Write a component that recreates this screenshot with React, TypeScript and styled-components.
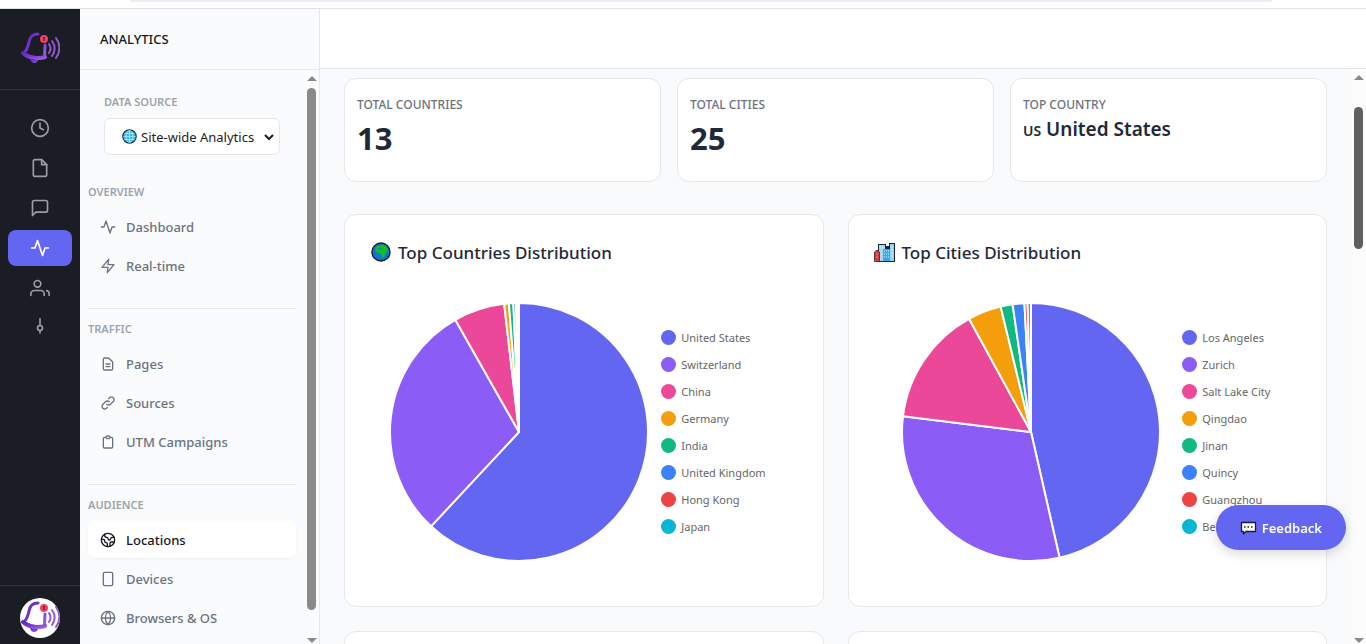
import React from 'react';
import styled, { createGlobalStyle } from 'styled-components';

const sans = `"Noto Sans", "Open Sans", sans-serif`;

const GlobalStyle = createGlobalStyle`
  *, *::before, *::after { box-sizing: border-box; }
  html, body, #root { height: 100%; }
  body { margin: 0; background: #fff; color: #1f2937; font-family: ${sans}; overflow: hidden; }
  button, select { font-family: inherit; }
  a { color: inherit; text-decoration: none; }
  h1, h2, h3, p, ul, dl, dd { margin: 0; padding: 0; }
  ul { list-style: none; }
`;

const Page = styled.div`
  display: flex;
  flex-direction: column;
  height: 100vh;
`;

const TopStrip = styled.div`
  display: flex;
  justify-content: center;
  height: 9px;
  flex: none;
  padding: 0 94px 0 130px;
  border-bottom: 1px solid #dfe1e5;
`;

const TopPill = styled.div`
  flex: 1;
  height: 2px;
  background: #ecedf9;
  border-radius: 0 0 8px 8px;
`;

const Shell = styled.div`
  display: grid;
  grid-template-columns: 80px 240px minmax(0, 1fr);
  flex: 1;
  min-height: 0;
`;

const Rail = styled.nav`
  display: flex;
  flex-direction: column;
  min-height: 0;
  background: #1a1d24;
`;

const RailLogo = styled.a`
  display: flex;
  align-items: center;
  justify-content: center;
  height: 81px;
  border-bottom: 1px solid #2e3138;
`;

const RailList = styled.ul`
  display: flex;
  flex: 1;
  flex-direction: column;
  gap: 4px;
  padding: 20px 8px 0;
`;

const RailLink = styled.a<{ $active?: boolean }>`
  display: flex;
  align-items: center;
  justify-content: center;
  height: 36px;
  border-radius: 8px;
  color: ${p => (p.$active ? '#fff' : '#9a9da5')};
  background: ${p => (p.$active ? '#6366f1' : 'transparent')};
`;

const RailFooter = styled.div`
  display: flex;
  justify-content: center;
  padding: 12px 0 6px;
  border-top: 1px solid #2e3138;
`;

const Avatar = styled.button`
  display: flex;
  align-items: center;
  justify-content: center;
  width: 40px;
  height: 40px;
  padding: 0;
  border: 0;
  border-radius: 50%;
  background: #fff;
  overflow: hidden;
`;

const Side = styled.aside`
  display: flex;
  flex-direction: column;
  min-height: 0;
  background: #fafbfc;
  border-right: 1px solid #e5e7eb;
`;

const SideHeader = styled.header`
  display: flex;
  align-items: center;
  height: 61px;
  flex: none;
  padding: 0 20px;
  border-bottom: 1px solid #e5e7eb;
`;

const SideTitle = styled.h1`
  font-size: 13px;
  line-height: 20px;
  font-weight: 500;
  color: #14171f;
`;

const ScrollRow = styled.div`
  display: flex;
  flex: 1;
  min-height: 0;
`;

const SideBody = styled.div`
  flex: 1;
  min-width: 0;
  padding: 8px 8px 0;
  overflow: hidden;
`;

const ScrollTrack = styled.div<{ $width: number; $light?: boolean }>`
  display: flex;
  flex: none;
  flex-direction: column;
  align-items: center;
  width: ${p => p.$width}px;
  padding: 6px 0 1px;
  background: ${p => (p.$light ? '#fcfcfc' : 'transparent')};
`;

const ArrowUp = styled.span`
  border: 5px solid transparent;
  border-top: 0;
  border-bottom-color: #8a8a8a;
`;

const ArrowDown = styled.span`
  margin-top: auto;
  border: 5px solid transparent;
  border-bottom: 0;
  border-top-color: #8a8a8a;
`;

const Thumb = styled.span<{ $top: number; $height: string; $color: string }>`
  width: 9px;
  height: ${p => p.$height};
  margin-top: ${p => p.$top}px;
  border-radius: 5px;
  background: ${p => p.$color};
`;

const Source = styled.div`
  display: flex;
  flex-direction: column;
  gap: 6px;
  padding: 14px 16px 17px;
`;

const Caption = styled.span`
  display: block;
  font-size: 11px;
  line-height: 20px;
  font-weight: 600;
  color: #9ca3af;
`;

const SelectBox = styled.div`
  display: flex;
  align-items: center;
  height: 37px;
  padding: 0 2px 0 17px;
  background: #fff;
  border: 1px solid #e5e7eb;
  border-radius: 6px;
`;

const Select = styled.select`
  flex: 1;
  min-width: 0;
  height: 32px;
  padding: 0;
  border: 0;
  background: transparent;
  color: #1a1d24;
  font-size: 13px;
  font-weight: 400;
`;

const NavSection = styled.section`
  padding: 10px 0 24px;
  border-bottom: 1px solid #e5e7eb;
  &:last-child { border-bottom: 0; }
`;

const NavHeading = styled(Caption).attrs({ as: 'h2' })`
  padding-bottom: 7px;
`;

const NavList = styled.ul`
  display: flex;
  flex-direction: column;
  gap: 3px;
`;

const NavLink = styled.a<{ $active?: boolean }>`
  display: flex;
  align-items: center;
  gap: 10px;
  height: 36px;
  padding: 0 12px;
  border-radius: 6px;
  font-size: 13px;
  font-weight: 500;
  color: ${p => (p.$active ? '#14171f' : '#6b7280')};
  background: ${p => (p.$active ? '#fff' : 'transparent')};
  box-shadow: ${p => (p.$active ? '0 1px 2px rgba(0, 0, 0, 0.05)' : 'none')};
`;

const Main = styled.main`
  display: flex;
  flex-direction: column;
  min-width: 0;
  min-height: 0;
  background: #f9fafb;
`;

const MainHeader = styled.header`
  height: 60px;
  flex: none;
  background: #fff;
  border-bottom: 1px solid #e5e7eb;
`;

const MainBody = styled.div`
  display: flex;
  flex: 1;
  flex-direction: column;
  gap: 32px;
  min-width: 0;
  padding: 9px 24px 0;
  overflow: hidden;
`;

const StatGrid = styled.dl`
  display: grid;
  grid-template-columns: repeat(3, minmax(0, 1fr));
  gap: 16px;
`;

const Card = styled.section`
  background: #fff;
  border: 1px solid #e5e7eb;
  border-radius: 12px;
`;

const StatCard = styled(Card).attrs({ as: 'div' })`
  height: 104px;
  padding: 16px 12px;
`;

const StatLabel = styled.dt`
  font-size: 12px;
  line-height: 20px;
  font-weight: 500;
  color: #6b7280;
`;

const StatValue = styled.dd<{ $small?: boolean }>`
  font-size: ${p => (p.$small ? 19 : 31)}px;
  line-height: ${p => (p.$small ? 28 : 46)}px;
  font-weight: ${p => (p.$small ? 600 : 700)};
  color: #1f2937;
`;

const FlagCode = styled.span`
  font-size: 14px;
  font-weight: 600;
`;

const ChartGrid = styled.div`
  display: grid;
  grid-template-columns: repeat(2, minmax(0, 1fr));
  gap: 24px;
`;

const ChartCard = styled(Card)`
  min-height: 393px;
  padding: 24px;
`;

const ChartTitle = styled.h3`
  display: flex;
  align-items: center;
  gap: 6px;
  height: 26px;
  margin-bottom: 17px;
  font-size: 17px;
  font-weight: 500;
  color: #1f2937;
`;

const ChartBody = styled.div<{ $gap: number }>`
  display: flex;
  align-items: center;
  justify-content: center;
  gap: ${p => p.$gap}px;
  height: 300px;
`;

const Legend = styled.ul<{ $width: number }>`
  display: flex;
  flex-direction: column;
  gap: 7px;
  width: ${p => p.$width}px;
`;

const LegendItem = styled.li`
  display: flex;
  align-items: center;
  gap: 5px;
  font-size: 11px;
  line-height: 20px;
  color: #666;
  white-space: nowrap;
`;

const Dot = styled.span<{ $color: string }>`
  width: 15px;
  height: 15px;
  flex: none;
  border-radius: 50%;
  background: ${p => p.$color};
`;

const Feedback = styled.button`
  position: fixed;
  right: 20px;
  bottom: 94px;
  display: flex;
  align-items: center;
  gap: 5px;
  height: 45px;
  padding: 0 24px;
  border: 0;
  border-radius: 23px;
  background: #6366f1;
  color: #fff;
  font-size: 13px;
  font-weight: 600;
  box-shadow: 0 4px 12px rgba(0, 0, 0, 0.15);
`;

const Glyph = ({ size, width = 2, children }: { size: number; width?: number; children: React.ReactNode }) => (
  <svg width={size} height={size} viewBox="0 0 24 24" fill="none" stroke="currentColor" strokeWidth={width}
    strokeLinecap="round" strokeLinejoin="round" aria-hidden="true">
    {children}
  </svg>
);

const shapes = {
  clock: <><circle cx="12" cy="12" r="10" /><path d="M12 6v6l4 2" /></>,
  file: <><path d="M14 2H6a2 2 0 0 0-2 2v16a2 2 0 0 0 2 2h12a2 2 0 0 0 2-2V8z" /><path d="M14 2v6h6" /></>,
  message: <path d="M21 15a2 2 0 0 1-2 2H7l-4 4V5a2 2 0 0 1 2-2h14a2 2 0 0 1 2 2z" />,
  activity: <path d="M22 12h-4l-3 9L9 3l-3 9H2" />,
  users: <><path d="M17 21v-2a4 4 0 0 0-4-4H5a4 4 0 0 0-4 4v2" /><circle cx="9" cy="7" r="4" /><path d="M23 21v-2a4 4 0 0 0-3-3.87" /></>,
  node: <><circle cx="12" cy="12" r="3" /><path d="M12 1v8M12 15v3" /></>,
  bolt: <path d="M13 2 3 14h9l-1 8 10-12h-9z" />,
  doc: <path d="M9 12h6m-6 4h6m2 5H7a2 2 0 0 1-2-2V5a2 2 0 0 1 2-2h5.59a1 1 0 0 1 .7.29l5.42 5.42a1 1 0 0 1 .29.7V19a2 2 0 0 1-2 2z" />,
  link: <path d="M13.83 10.17a4 4 0 0 0-5.66 0l-4 4a4 4 0 1 0 5.66 5.66l1.1-1.1m-.76-4.9a4 4 0 0 0 5.66 0l4-4a4 4 0 0 0-5.66-5.66l-1.1 1.1" />,
  clipboard: <path d="M9 5H7a2 2 0 0 0-2 2v12a2 2 0 0 0 2 2h10a2 2 0 0 0 2-2V7a2 2 0 0 0-2-2h-2M9 5a2 2 0 0 0 2 2h2a2 2 0 0 0 2-2M9 5a2 2 0 0 1 2-2h2a2 2 0 0 1 2 2" />,
  earth: <><circle cx="12" cy="12" r="10" /><path d="M21.540 15H17a2 2 0 0 0-2 2v4.540M7 3.340V5a3 3 0 0 0 3 3 2 2 0 0 1 2 2c0 1.100.9 2 2 2a2 2 0 0 0 2-2c0-1.100.9-2 2-2h3.170M11 21.950V18a2 2 0 0 0-2-2 2 2 0 0 1-2-2v-1a2 2 0 0 0-2-2H2.050" /></>,
  device: <rect x="5" y="2" width="14" height="20" rx="2" />,
  globe: <><circle cx="12" cy="12" r="10" /><path d="M2 12h20M12 2a15.3 15.3 0 0 1 4 10 15.3 15.3 0 0 1-4 10 15.3 15.3 0 0 1-4-10 15.3 15.3 0 0 1 4-10z" /></>,
};

const BellLogo = ({ id }: { id: string }) => (
  <svg width="40" height="40" viewBox="0 0 40 40" fill="none" aria-hidden="true">
    <defs>
      <linearGradient id={id} x1="0" y1="0" x2="1" y2="1">
        <stop offset="0" stopColor="#5b2bb8" />
        <stop offset="0.5" stopColor="#7a35d6" />
        <stop offset="1" stopColor="#9a5fe0" />
      </linearGradient>
    </defs>
    <g stroke={`url(#${id})`} strokeLinecap="round" strokeLinejoin="round">
      <path d="M18 5c-6 0-8 3-9 8-1 5-2 8-5 11 4 4 16 6 21 4-1-4 0-7 0-12" strokeWidth="3" />
      <path d="M3 24c5 5 15 6 22 4" strokeWidth="4" />
      <path d="M17 4h3" strokeWidth="4" />
    </g>
    <path d="M10 30c1 5 7 5 8 1z" fill={`url(#${id})`} />
    <g stroke="#9657c9" strokeLinecap="round" strokeWidth="2">
      <path d="M29 15c2 3 2 6 0 9" />
      <path d="M32 12c4 5 3 11 0 15" />
      <path d="M36 9c5 7 4 14 0 20" />
    </g>
    <circle cx="24" cy="10" r="4" fill="#f43f5e" />
    <path d="M23 9l1-1v4" stroke="#3b1030" />
  </svg>
);

const WebEmoji = () => (
  <svg width="15" height="15" viewBox="0 0 15 15" fill="none" aria-hidden="true">
    <circle cx="7.5" cy="7.5" r="6.7" fill="#35b8f1" stroke="#173a4c" strokeWidth="1.2" />
    <path d="M1.5 7.5h12M7.5 1.5v12M2.5 4.5h10M2.5 10.5h10" stroke="#b9e8fb" strokeWidth="0.8" />
    <ellipse cx="7.5" cy="7.5" rx="3.3" ry="6" stroke="#b9e8fb" strokeWidth="0.8" />
  </svg>
);

const EarthEmoji = () => (
  <svg width="23" height="20" viewBox="0 0 23 20" aria-hidden="true">
    <circle cx="12" cy="10" r="9" fill="#0a78d4" stroke="#171b24" strokeWidth="1.4" />
    <path d="M6.500 6 8 4l3-.5 3-1 3.500 2 1.500 3-1 2.500-2 2-1 3-1.800 1-1.200-3.500-1.500-1.500-3-.5-1-2z" fill="#17bd1f" />
    <path d="M9 6.500h3l2 1.500" fill="none" stroke="#0a78d4" strokeWidth="0.800" />
  </svg>
);

const CityEmoji = () => (
  <svg width="23" height="20" viewBox="0 0 23 20" aria-hidden="true">
    <path d="M5 2h8v2h3V1h6v19H5z" fill="#1c2530" />
    <path d="M6 3h6v16H6z" fill="#a5dcf2" />
    <path d="M17 2h4v17h-4z" fill="#8fd3f0" />
    <path d="M10 7h7v12h-7z" fill="#38a9e6" />
    <path d="M11 9h1M13 9h1M15 9h1M11 12h1M13 12h1M15 12h1M11 15h1M13 15h1M15 15h1M18 5h2M18 8h2M18 11h2M18 14h2M7 5h1M9 5h1" stroke="#d8f2fd" />
    <path d="M1.500 19.500V10L4 8l2.500 2v9.500z" fill="#e2383f" stroke="#43202a" strokeWidth="0.800" />
    <path d="M3.500 12h1M3.500 15h1" stroke="#ffb0a8" />
  </svg>
);

const SpeechEmoji = () => (
  <svg width="17" height="16" viewBox="0 0 17 16" aria-hidden="true">
    <path d="M1.500 2.500h14v9H6l-2.500 2.500v-2.500h-2z" fill="#fff" stroke="#191b2b" strokeWidth="1.300" strokeLinejoin="round" />
    <path d="M4 7h1.500M7.500 7H9M11 7h1.500" stroke="#191b2b" strokeWidth="1.500" />
  </svg>
);

const palette = ['#6366f1', '#8b5cf6', '#ec4899', '#f59e0b', '#10b981', '#3b82f6', '#ef4444', '#06b6d4'];

type Slice = { label: string; end: number };

const countries: Slice[] = [
  { label: 'United States', end: 223 },
  { label: 'Switzerland', end: 330.4 },
  { label: 'China', end: 353.4 },
  { label: 'Germany', end: 355.5 },
  { label: 'India', end: 357.5 },
  { label: 'United Kingdom', end: 358.7 },
  { label: 'Hong Kong', end: 359.4 },
  { label: 'Japan', end: 360 },
];

const cities: Slice[] = [
  { label: 'Los Angeles', end: 167.2 },
  { label: 'Zurich', end: 277 },
  { label: 'Salt Lake City', end: 331.3 },
  { label: 'Qingdao', end: 346.4 },
  { label: 'Jinan', end: 351.8 },
  { label: 'Quincy', end: 357.1 },
  { label: 'Guangzhou', end: 358.5 },
  { label: 'Beijing', end: 360 },
];

const RADIUS = 129;

const point = (deg: number) => {
  const a = ((deg - 90) * Math.PI) / 180;
  return `${(RADIUS * Math.cos(a)).toFixed(2)} ${(RADIUS * Math.sin(a)).toFixed(2)}`;
};

const Pie = ({ slices, label }: { slices: Slice[]; label: string }) => (
  <svg width="258" height="258" viewBox="-129 -129 258 258" role="img" aria-label={label}>
    {slices.map((s, i) => {
      const start = i ? slices[i - 1].end : 0;
      return (
        <path
          key={s.label}
          d={`M0 0L${point(start)}A${RADIUS} ${RADIUS} 0 ${s.end - start > 180 ? 1 : 0} 1 ${point(s.end)}Z`}
          fill={palette[i]}
          stroke="#fff"
          strokeWidth="2"
          strokeLinejoin="bevel"
        />
      );
    })}
  </svg>
);

type ChartProps = { title: string; icon: React.ReactNode; slices: Slice[]; gap: number; legendWidth: number };

const Chart = ({ title, icon, slices, gap, legendWidth }: ChartProps) => (
  <ChartCard>
    <ChartTitle>{icon}{title}</ChartTitle>
    <ChartBody $gap={gap}>
      <Pie slices={slices} label={title} />
      <Legend $width={legendWidth}>
        {slices.map((s, i) => (
          <LegendItem key={s.label}><Dot $color={palette[i]} />{s.label}</LegendItem>
        ))}
      </Legend>
    </ChartBody>
  </ChartCard>
);

const rail: { name: string; icon: keyof typeof shapes }[] = [
  { name: 'History', icon: 'clock' },
  { name: 'Files', icon: 'file' },
  { name: 'Messages', icon: 'message' },
  { name: 'Analytics', icon: 'activity' },
  { name: 'Users', icon: 'users' },
  { name: 'Integrations', icon: 'node' },
];

const sections: { title: string; items: { name: string; icon: keyof typeof shapes }[] }[] = [
  { title: 'OVERVIEW', items: [{ name: 'Dashboard', icon: 'activity' }, { name: 'Real-time', icon: 'bolt' }] },
  {
    title: 'TRAFFIC',
    items: [{ name: 'Pages', icon: 'doc' }, { name: 'Sources', icon: 'link' }, { name: 'UTM Campaigns', icon: 'clipboard' }],
  },
  {
    title: 'AUDIENCE',
    items: [{ name: 'Locations', icon: 'earth' }, { name: 'Devices', icon: 'device' }, { name: 'Browsers & OS', icon: 'globe' }],
  },
];

export default function App() {
  return (
    <>
      <GlobalStyle />
      <Page>
        <TopStrip><TopPill /></TopStrip>
        <Shell>
          <Rail aria-label="Main">
            <RailLogo href="#" aria-label="Home"><BellLogo id="bell-logo" /></RailLogo>
            <RailList>
              {rail.map(r => (
                <li key={r.name}>
                  <RailLink href="#" aria-label={r.name} $active={r.name === 'Analytics'}>
                    <Glyph size={20}>{shapes[r.icon]}</Glyph>
                  </RailLink>
                </li>
              ))}
            </RailList>
            <RailFooter>
              <Avatar aria-label="Account"><BellLogo id="bell-avatar" /></Avatar>
            </RailFooter>
          </Rail>
          <Side>
            <SideHeader><SideTitle>ANALYTICS</SideTitle></SideHeader>
            <ScrollRow>
              <SideBody>
                <Source>
                  <Caption as="label" htmlFor="source">DATA SOURCE</Caption>
                  <SelectBox>
                    <WebEmoji />
                    <Select id="source" defaultValue="site"><option value="site">Site-wide Analytics</option></Select>
                  </SelectBox>
                </Source>
                {sections.map(s => (
                  <NavSection key={s.title}>
                    <NavHeading>{s.title}</NavHeading>
                    <NavList>
                      {s.items.map(item => (
                        <li key={item.name}>
                          <NavLink href="#" $active={item.name === 'Locations'}>
                            <Glyph size={16}>{shapes[item.icon]}</Glyph>
                            {item.name}
                          </NavLink>
                        </li>
                      ))}
                    </NavList>
                  </NavSection>
                ))}
              </SideBody>
              <ScrollTrack $width={15}>
                <ArrowUp />
                <Thumb $top={7} $height="92%" $color="#8a8a8a" />
                <ArrowDown />
              </ScrollTrack>
            </ScrollRow>
          </Side>
          <Main>
            <MainHeader />
            <ScrollRow>
              <MainBody>
                <StatGrid>
                  <StatCard><StatLabel>TOTAL COUNTRIES</StatLabel><StatValue>13</StatValue></StatCard>
                  <StatCard><StatLabel>TOTAL CITIES</StatLabel><StatValue>25</StatValue></StatCard>
                  <StatCard>
                    <StatLabel>TOP COUNTRY</StatLabel>
                    <StatValue $small><FlagCode>US</FlagCode> United States</StatValue>
                  </StatCard>
                </StatGrid>
                <ChartGrid>
                  <Chart title="Top Countries Distribution" icon={<EarthEmoji />} slices={countries} gap={13} legendWidth={116} />
                  <Chart title="Top Cities Distribution" icon={<CityEmoji />} slices={cities} gap={22} legendWidth={90} />
                  <ChartCard />
                  <ChartCard />
                </ChartGrid>
              </MainBody>
              <ScrollTrack $width={15} $light>
                <ArrowUp />
                <Thumb $top={27} $height="25%" $color="#606060" />
                <ArrowDown />
              </ScrollTrack>
            </ScrollRow>
          </Main>
        </Shell>
        <Feedback><SpeechEmoji />Feedback</Feedback>
      </Page>
    </>
  );
}
